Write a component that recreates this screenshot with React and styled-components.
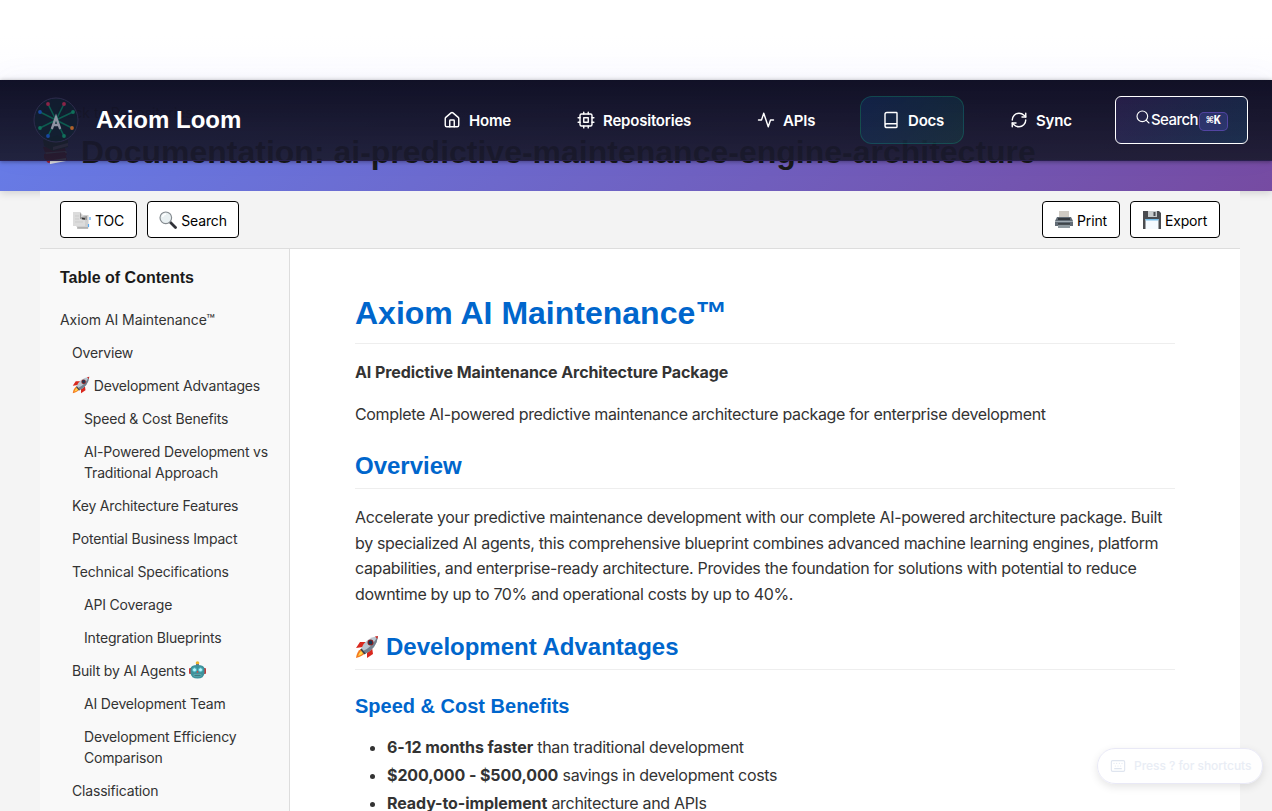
import React from "react";
import styled, { createGlobalStyle } from "styled-components";
import { House, Book, RefreshCw, Search, Keyboard } from "lucide-react";

const Global = createGlobalStyle`
  *, *::before, *::after { box-sizing: border-box; }
  html, body { margin: 0; padding: 0; height: 811px; overflow: hidden; }
  body {
    background: #f4f4f4;
    color: #333;
    font-family: Inter, "Liberation Sans", sans-serif;
    font-size: 16px;
    line-height: 1.6;
  }
`;

const heading = `font-family: "Liberation Sans", Arial, sans-serif; font-weight: 700;`;

const Page = styled.div`
  position: relative;
  height: 811px;
  overflow: hidden;
  display: flex;
  flex-direction: column;
`;
const TopSpace = styled.div`
  height: 80px;
  flex: none;
  background: linear-gradient(180deg, #fff 0%, #fff 45%, #fcfcff 100%);
`;
const Hero = styled.header`
  height: 111px;
  flex: none;
  padding: 20px 40px 0;
  color: #1a1a1a;
  background: linear-gradient(135deg, #667eea 0%, #764ba2 100%);
  box-shadow: 0 2px 8px rgba(0, 0, 0, 0.15);
`;
const BackLink = styled.div`
  padding-left: 0;
  font-size: 14px;
  line-height: 26px;
  color: #333;
`;
const Title = styled.h1`
  ${heading}
  display: flex;
  align-items: center;
  gap: 9px;
  margin: 7px 0 0;
  font-size: 32px;
  line-height: 38px;
  white-space: nowrap;
  svg { margin-top: -5px; }
`;

const Nav = styled.nav`
  position: absolute;
  top: 80px;
  left: 0;
  right: 0;
  height: 81px;
  display: flex;
  align-items: center;
  padding: 0 24px 1px 33px;
  background: linear-gradient(180deg, rgba(15, 15, 35, 0.98) 0%, rgba(26, 26, 46, 0.91) 100%);
  border-bottom: 1px solid rgba(139, 92, 246, 0.2);
  box-shadow: 0 1px 4px rgba(0, 0, 0, 0.35), 0 -4px 30px rgba(99, 102, 241, 0.04);
`;
const Brand = styled.div`
  display: flex;
  align-items: center;
  gap: 17px;
  width: 388px;
  color: #fff;
  ${heading}
  font-size: 24px;
  span { padding-top: 1px; }
`;
const NavLink = styled.a`
  display: flex;
  align-items: center;
  gap: 8px;
  height: 48px;
  width: ${(p) => p.$w}px;
  margin-right: ${(p) => p.$gap}px;
  padding-left: 21px;
  border-radius: 12px;
  border: 1px solid ${(p) => (p.$active ? "rgba(16, 185, 129, 0.25)" : "transparent")};
  background: ${(p) =>
    p.$active ? "linear-gradient(135deg, rgba(14, 60, 130, 0.32), rgba(16, 110, 90, 0.22))" : "transparent"};
  color: #fff;
  font-size: 15px;
  font-weight: 600;
  letter-spacing: -0.2px;
  white-space: nowrap;
  span { padding-top: 2px; }
`;
const SearchButton = styled.button`
  display: flex;
  align-items: center;
  justify-content: center;
  width: 133px;
  height: 48px;
  margin-left: auto;
  padding: 0;
  border: 1px solid #fff;
  border-radius: 6px;
  background: linear-gradient(135deg, rgba(139, 92, 246, 0.14), rgba(14, 165, 233, 0.14));
  color: #fff;
  font-family: inherit;
  font-size: 15px;
  font-weight: 500;
  letter-spacing: -0.55px;
  svg { margin-bottom: 6px; }
`;
const Kbd = styled.kbd`
  width: 29px;
  height: 19px;
  margin: 3px 0 0 1px;
  border: 1px solid rgba(139, 92, 246, 0.4);
  border-radius: 5px;
  background: rgba(99, 102, 241, 0.2);
  font-family: "Liberation Mono", "DejaVu Sans Mono", monospace;
  font-size: 12px;
  font-weight: 700;
  line-height: 17px;
  letter-spacing: 0;
`;

const Shell = styled.main`
  position: relative;
  flex: 1;
  min-height: 0;
  width: 1200px;
  margin-left: 40px;
  display: flex;
  flex-direction: column;
  background: #fff;
`;
const Toolbar = styled.div`
  display: flex;
  justify-content: space-between;
  height: 58px;
  flex: none;
  padding: 10px 20px;
  background: #f3f3f3;
  border-bottom: 1px solid #ddd;
`;
const Group = styled.div`
  display: flex;
  gap: 10px;
`;
const ToolButton = styled.button`
  display: flex;
  align-items: center;
  justify-content: center;
  gap: 4px;
  width: ${(p) => p.$w}px;
  height: 37px;
  padding: 2px 0 0;
  border: 1px solid #000;
  border-radius: 4px;
  background: #fff;
  color: #000;
  font-family: inherit;
  font-size: 14px;
  letter-spacing: -0.15px;
  svg { margin-top: -1px; }
`;
const Body = styled.div`
  display: flex;
  flex: 1;
  min-height: 0;
`;
const Sidebar = styled.aside`
  width: 250px;
  flex: none;
  padding: 16px 20px 0;
  background: #f9f9f9;
  border-right: 1px solid #ddd;
`;
const SideTitle = styled.h3`
  ${heading}
  margin: 0 0 19px;
  color: #1a1a1a;
  font-size: 16px;
  line-height: 25px;
`;
const TocItem = styled.div`
  margin-bottom: 12px;
  padding-left: ${(p) => p.$level * 12}px;
  font-size: 14px;
  line-height: 21px;
  letter-spacing: ${(p) => (p.$level ? -0.18 : -0.06)}px;
  svg { vertical-align: -3px; }
`;
const Article = styled.article`
  width: 820px;
  margin-left: 65px;
  p { margin: 0 0 16px; line-height: 25.6px; letter-spacing: -0.34px; }
  strong { letter-spacing: -0.09px; }
`;
const H1 = styled.h1`
  ${heading}
  margin: 44px 0 16px;
  padding-bottom: 10px;
  border-bottom: 1px solid #eee;
  color: #0066cc;
  font-size: 32px;
  line-height: 40px;
`;
const H2 = styled.h2`
  ${heading}
  margin: 24px 0 16px;
  padding-bottom: 7px;
  border-bottom: 1px solid #eee;
  color: #0066cc;
  font-size: 24px;
  line-height: 30px;
  svg { vertical-align: -4px; margin-right: 7px; }
`;
const H3 = styled.h3`
  ${heading}
  margin: 24px 0 16px;
  color: #0066cc;
  font-size: 20px;
  line-height: 25px;
`;
const List = styled.ul`
  margin: 0;
  padding-left: 32px;
  letter-spacing: -0.31px;
  li { line-height: 25.6px; margin-bottom: 2.4px; }
`;
const Hint = styled.div`
  position: absolute;
  left: 1097px;
  top: 748px;
  width: 166px;
  height: 36px;
  display: flex;
  align-items: center;
  gap: 8px;
  padding-left: 12px;
  border: 1px solid #e9e9f6;
  border-radius: 18px;
  background: rgba(255, 255, 255, 0.85);
  box-shadow: 0 3px 8px rgba(0, 0, 0, 0.1);
  color: #e9edf5;
  font-size: 12px;
  font-weight: 500;
  letter-spacing: -0.05px;
  white-space: nowrap;
  svg { color: #dfe5ef; }
`;

const nodes = [
  [15, 7, "#8b2447"], [31, 7, "#8b2447"], [7, 15, "#1747a0"], [40, 15, "#10705a"],
  [7, 31, "#10705a"], [39, 31, "#b0602a"], [15, 39, "#1747a0"], [31, 39, "#10705a"],
];
const Logo = () => (
  <svg width="46" height="46" viewBox="0 0 46 46">
    <circle cx="23" cy="23" r="22" fill="#10202f" fillOpacity=".65" stroke="#2d2c4d" />
    {nodes.map(([x, y]) => (
      <path key={`${x}-${y}`} d={`M23 23L${x} ${y}`} stroke="#0d5c50" strokeWidth="1.5" />
    ))}
    {nodes.map(([x, y, c]) => (
      <circle key={`${x}.${y}`} cx={x} cy={y} r="1.9" fill={c} />
    ))}
    <path d="M18.8 32L23 20L27.2 32M20.5 28H25.5" fill="none" stroke="#8e92a2" strokeWidth="2.3" />
  </svg>
);
const Books = () => (
  <svg width="32" height="32" viewBox="0 0 32 32">
    <path d="M3 13L24 11L27 21L7 24Z" fill="#a32132" />
    <path d="M5 18.500L26 17L27 19L7 21Z" fill="#ddd" />
    <path d="M4 20L25 18L27 26L8 29L4 24Z" fill="#ad2336" />
    <path d="M10 26.500L26 24V27L10 30Z" fill="#eee" />
    <path d="M3 6L17 1L28 6V13L13 17L4 12Z" fill="#296b35" />
    <path d="M13 13L28 9V12L13 16Z" fill="#ddd" />
  </svg>
);
const Rocket = ({ size }) => (
  <svg width={size} height={size} viewBox="0 0 24 24">
    <path d="M8 12L1 13L5 7L11 7ZM12 17L12 23L18 19L17 12Z" fill="#d9281e" />
    <path d="M6 14Q2 16 1 23Q8 21 10 18Z" fill="#f47a20" />
    <path d="M6 16Q4 18 3 21Q7 20 8 18Z" fill="#ffd94a" />
    <path d="M6 14Q10 3 23 1Q22 13 10 19Z" fill="#bac6d0" />
    <path d="M8 16Q16 13 23 1Q22 13 10 19Z" fill="#73818f" />
    <path d="M20 1.600L23 1L22.300 4Z" fill="#ce2c27" />
    <circle cx="15.5" cy="7.5" r="3" fill="#8c1e1e" />
    <circle cx="15.5" cy="7.5" r="1.9" fill="#173b58" />
    <path d="M6 14L10 19" stroke="#3c4349" strokeWidth="1.6" />
  </svg>
);
const Robot = () => (
  <svg width="17" height="18" viewBox="0 0 17 18">
    <circle cx="8.5" cy="2" r="1.8" fill="#f0b52c" />
    <rect x="7" y="3" width="3" height="3" fill="#6d7680" />
    <rect x="0" y="7" width="3" height="6" rx="1" fill="#c23b3b" />
    <rect x="14" y="7" width="3" height="6" rx="1" fill="#c23b3b" />
    <path d="M1.500 8Q1.500 4 8.500 4T15.500 8V12Q15 17.500 8.500 17.500T1.500 12Z" fill="#3e929c" />
    <circle cx="5.500" cy="8.800" r="2" fill="#b7f7ff" stroke="#4fb7c2" />
    <circle cx="11.500" cy="8.800" r="2" fill="#b7f7ff" stroke="#4fb7c2" />
    <path d="M8.500 9.500L9.500 11.500H7.500Z" fill="#d8423c" />
    <path d="M5 13.500H12V15H5Z" fill="#245c66" stroke="#8cc" strokeWidth=".5" />
  </svg>
);
const Pages = () => (
  <svg width="18" height="18" viewBox="0 0 18 18">
    <path d="M3 4H15.500V17.500H5.500L3 15Z" fill="#cfcfcf" />
    <path d="M4 17H15" stroke="#929292" />
    <path d="M0 1H7L12 6V15H0Z" fill="#dcdcdc" />
    <path d="M7 1Q9 4 8 6L14 5V9L7 8Z" fill="#999" />
    <path d="M9 7.500L12 8" stroke="#333" strokeWidth="1.5" />
    <path d="M17 6V9M15.500 13V16" stroke="#56aaf5" strokeWidth="1.2" />
    <path d="M2 5H6M2 8H6M2 11H10" stroke="#cbcbcb" />
  </svg>
);
const Lens = () => (
  <svg width="18" height="18" viewBox="0 0 18 18">
    <path d="M11 11L16.500 16.500" stroke="#303238" strokeWidth="2.800" strokeLinecap="round" />
    <circle cx="6.800" cy="6.800" r="5.800" fill="#e9f0f2" stroke="#858b90" strokeWidth="1.200" />
    <path d="M3.500 6Q4 3.500 7 3" fill="none" stroke="#fff" strokeWidth="1.300" />
  </svg>
);
const Printer = () => (
  <svg width="18" height="18" viewBox="0 0 18 18">
    <path d="M4 0H14V8H4Z" fill="#d0cbc4" />
    <path d="M2 6H16L18 10V15H0V10Z" fill="#626c76" />
    <path d="M3 7H15V9H3Z" fill="#34393f" />
    <path d="M0 10.500H18" stroke="#a0abb2" />
    <path d="M3 13H15V17H3Z" fill="#8e999f" />
    <path d="M3 13H15" stroke="#33383c" strokeWidth="1.500" />
  </svg>
);
const Floppy = () => (
  <svg width="18" height="18" viewBox="0 0 18 18">
    <path d="M0 0H16L18 2V18H0Z" fill="#4a4c50" />
    <path d="M5 0H14V6H5Z" fill="#c8cccd" />
    <path d="M10.500 1H12.500V5H10.500Z" fill="#4a4c50" />
    <path d="M2.500 8H15.500V18H2.500Z" fill="#f5faff" />
    <path d="M2.500 8H15.500V9.500H2.500Z" fill="#75bde9" />
  </svg>
);
const Line = ({ children, size, strokeWidth }) => (
  <svg width={size} height={size} viewBox="0 0 24 24" fill="none" stroke="currentColor"
    strokeWidth={strokeWidth} strokeLinecap="round" strokeLinejoin="round">{children}</svg>
);
const Chip = (props) => (
  <Line {...props}>
    <rect x="4" y="4" width="16" height="16" rx="2" />
    <rect x="9" y="9" width="6" height="6" />
    <path d="M9 1.500V4M15 1.500V4M9 20v2.500M15 20v2.500M20 9h2.500M20 15h2.500M1.500 9H4M1.500 15H4" />
  </Line>
);
const Pulse = (props) => (
  <Line {...props}>
    <path d="M22 12H18L15 21L9 3L6 12H2" />
  </Line>
);

const links = [
  { label: "Home", icon: House, w: 112, gap: 22 },
  { label: "Repositories", icon: Chip, w: 158, gap: 22 },
  { label: "APIs", icon: Pulse, w: 102, gap: 23 },
  { label: "Docs", icon: Book, w: 104, gap: 24, active: true },
  { label: "Sync", icon: RefreshCw, w: 106, gap: 0 },
];
const toc = [
  [0, "Axiom AI Maintenance™"],
  [1, "Overview"],
  [1, <><Rocket size={18} /> Development Advantages</>],
  [2, "Speed & Cost Benefits"],
  [2, "AI-Powered Development vs Traditional Approach"],
  [1, "Key Architecture Features"],
  [1, "Potential Business Impact"],
  [1, "Technical Specifications"],
  [2, "API Coverage"],
  [2, "Integration Blueprints"],
  [1, <>Built by AI Agents <Robot /></>],
  [2, "AI Development Team"],
  [2, "Development Efficiency Comparison"],
  [1, "Classification"],
];

export default function App() {
  return (
    <>
      <Global />
      <Page>
        <TopSpace />
        <Hero>
          <BackLink>← Back to Repositories</BackLink>
          <Title><Books />Documentation: ai-predictive-maintenance-engine-architecture</Title>
        </Hero>
        <Nav>
          <Brand><Logo /><span>Axiom Loom</span></Brand>
          {links.map(({ label, icon: Icon, w, gap, active }) => (
            <NavLink key={label} $w={w} $gap={gap} $active={active}>
              <Icon size={18} strokeWidth={1.9} /><span>{label}</span>
            </NavLink>
          ))}
          <SearchButton><Search size={16} strokeWidth={1.7} />Search<Kbd>⌘K</Kbd></SearchButton>
        </Nav>
        <Shell>
          <Toolbar>
            <Group>
              <ToolButton $w={77}><Pages />TOC</ToolButton>
              <ToolButton $w={92}><Lens />Search</ToolButton>
            </Group>
            <Group>
              <ToolButton $w={78}><Printer />Print</ToolButton>
              <ToolButton $w={90}><Floppy />Export</ToolButton>
            </Group>
          </Toolbar>
          <Body>
            <Sidebar>
              <SideTitle>Table of Contents</SideTitle>
              {toc.map(([level, label], i) => (
                <TocItem key={i} $level={level}>{label}</TocItem>
              ))}
            </Sidebar>
            <Article>
              <H1>Axiom AI Maintenance™</H1>
              <p><strong>AI Predictive Maintenance Architecture Package</strong></p>
              <p>Complete AI-powered predictive maintenance architecture package for enterprise development</p>
              <H2>Overview</H2>
              <p>
                Accelerate your predictive maintenance development with our complete AI-powered architecture
                package. Built by specialized AI agents, this comprehensive blueprint combines advanced machine
                learning engines, platform capabilities, and enterprise-ready architecture. Provides the
                foundation for solutions with potential to reduce downtime by up to 70% and operational costs by
                up to 40%.
              </p>
              <H2><Rocket size={24} />Development Advantages</H2>
              <H3>Speed &amp; Cost Benefits</H3>
              <List>
                <li><strong>6-12 months faster</strong> than traditional development</li>
                <li><strong>$200,000 - $500,000</strong> savings in development costs</li>
                <li><strong>Ready-to-implement</strong> architecture and APIs</li>
              </List>
            </Article>
          </Body>
        </Shell>
        <Hint><Keyboard size={16} strokeWidth={1.7} />Press ? for shortcuts</Hint>
      </Page>
    </>
  );
}
